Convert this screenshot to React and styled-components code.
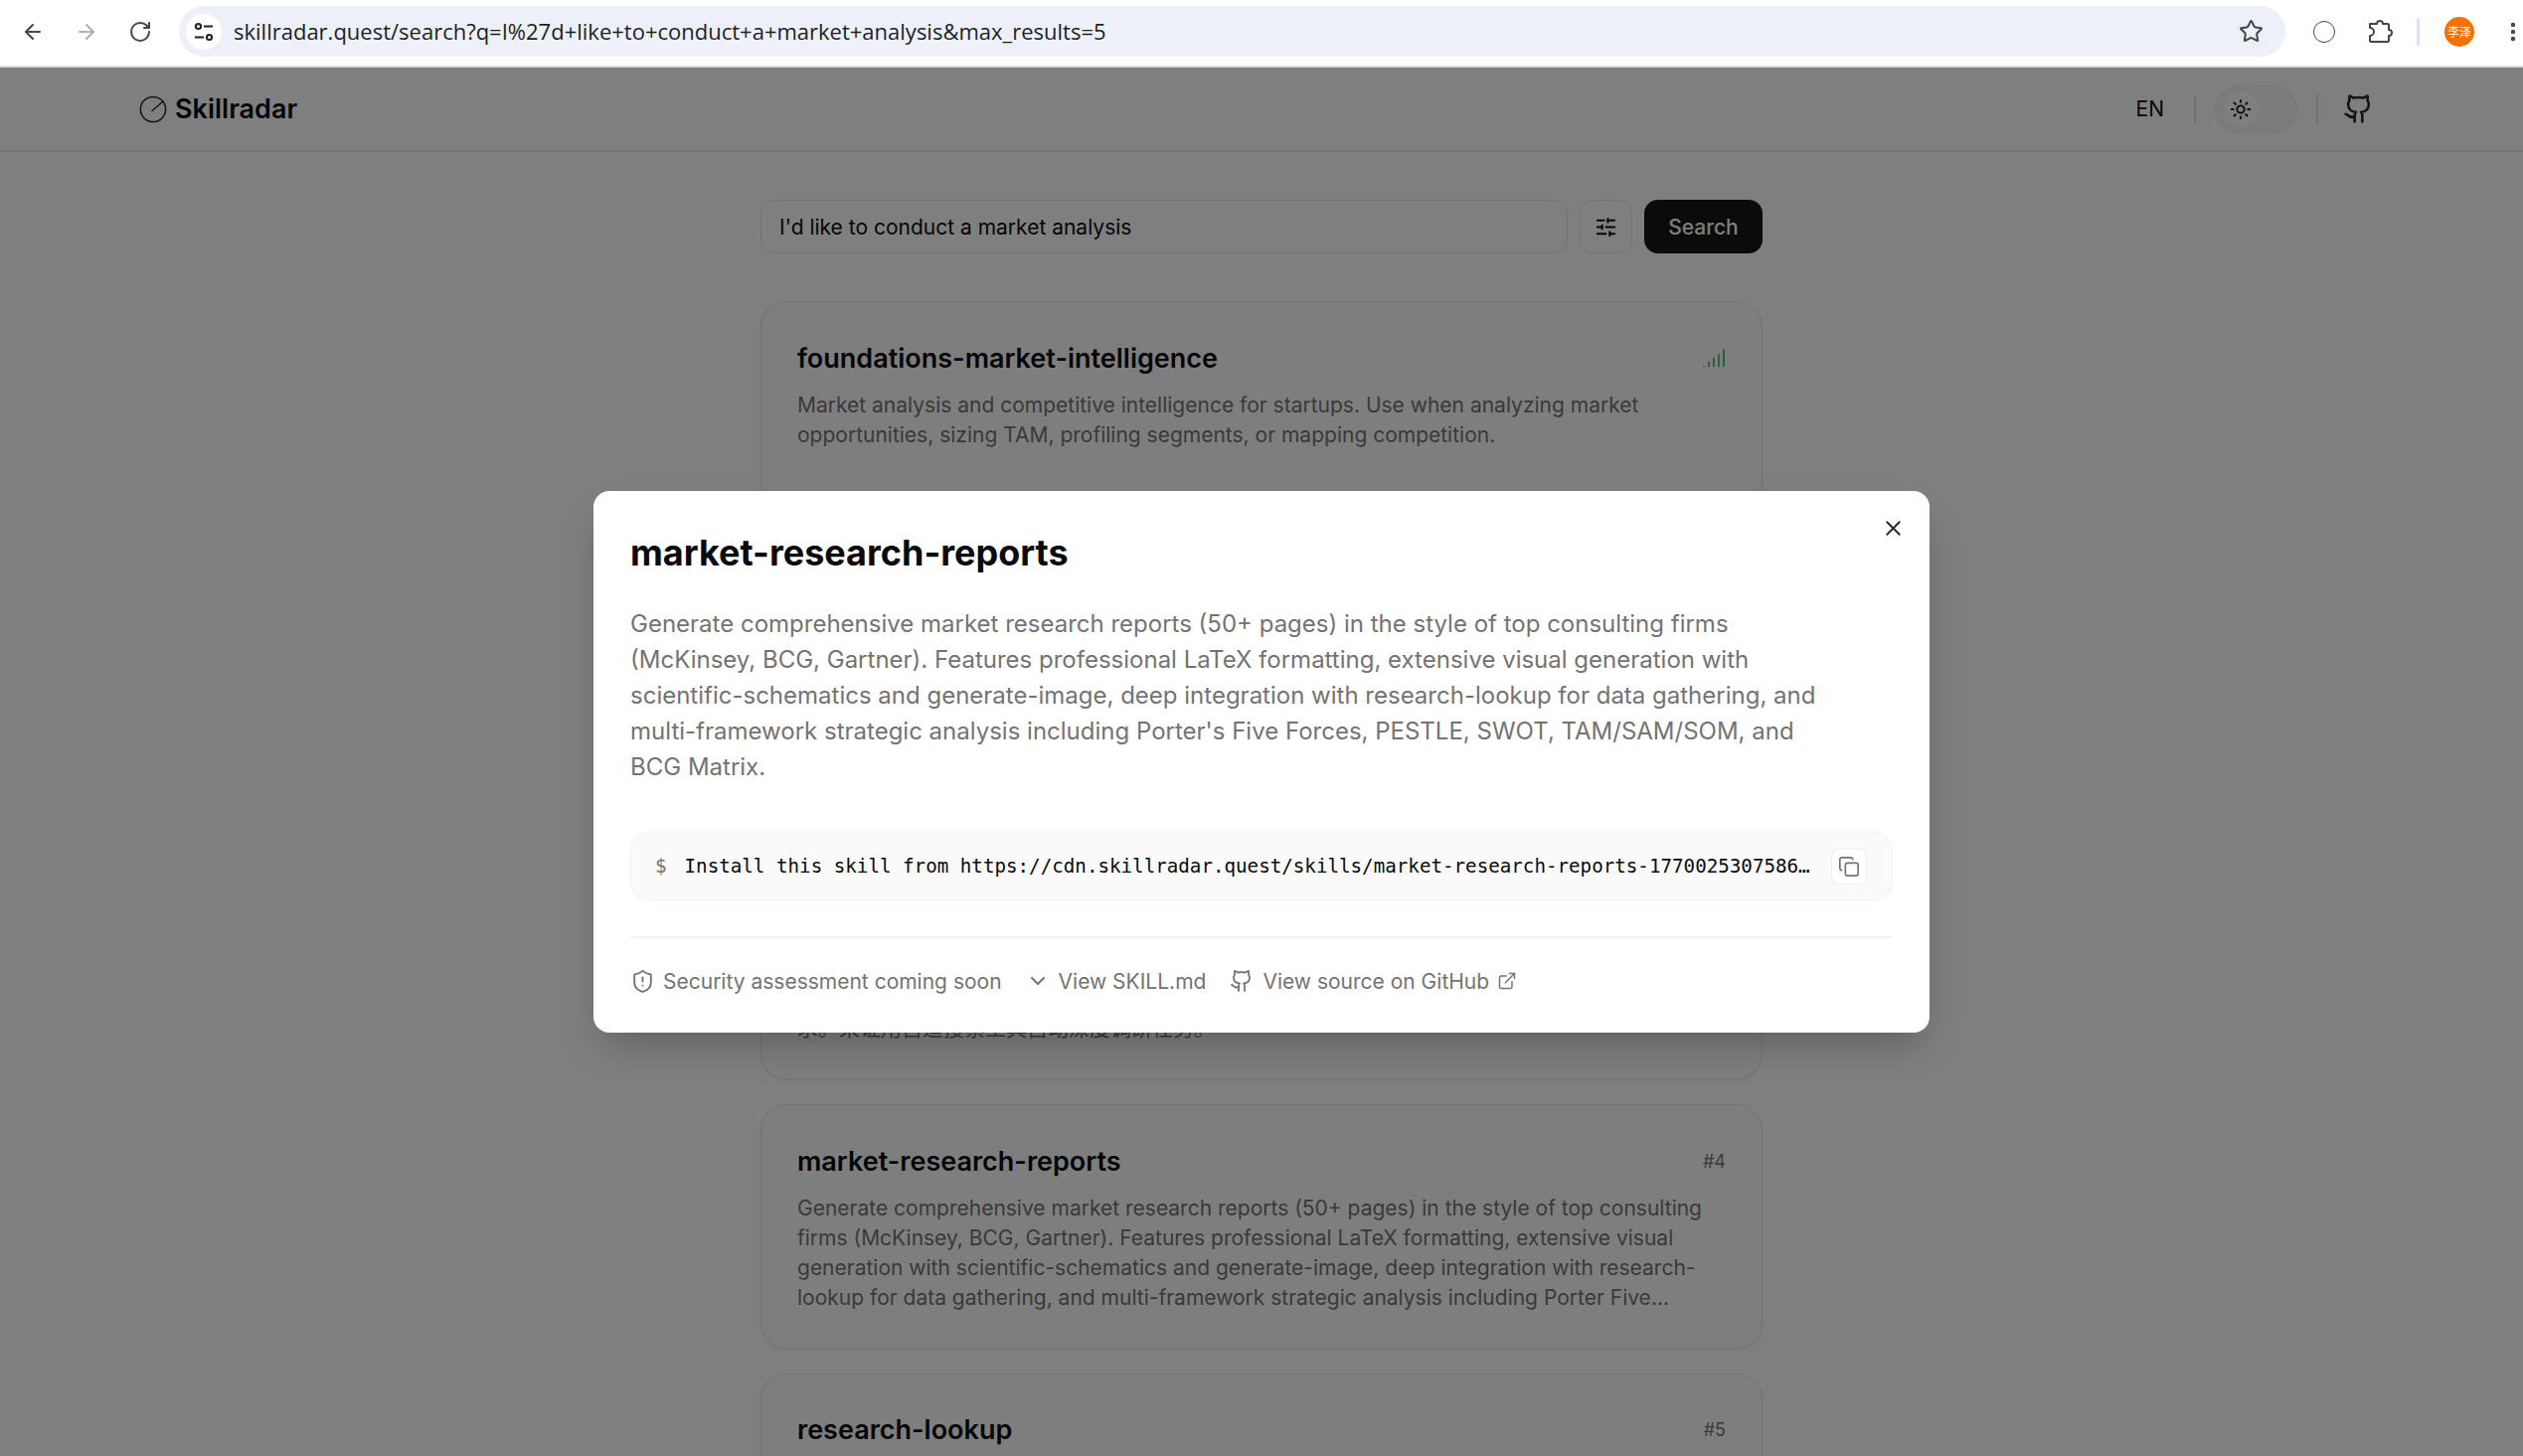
import styled, { createGlobalStyle } from 'styled-components';
import {
  ArrowLeft, ArrowRight, RotateCw, Star, MoreVertical, SlidersHorizontal,
  Sun, Github, X, Copy, ShieldAlert, ChevronDown, ExternalLink,
} from 'lucide-react';

const GlobalStyle = createGlobalStyle`
  html, body { margin: 0; padding: 0; background: #fff; }
  * { box-sizing: border-box; }
  body { font-family: Inter, "Noto Sans", sans-serif; color: #0a0a0a; }
`;

const Shell = styled.div`
  height: 100vh;
  display: flex;
  flex-direction: column;
  overflow: hidden;
`;

/* browser chrome */
const BrowserBar = styled.div`
  flex: none;
  height: 68px;
  display: flex;
  align-items: flex-start;
  padding-top: 6px;
  background: #fff;
  border-bottom: 2px solid #dcdcdc;
`;

const NavGroup = styled.div`
  width: 180px;
  height: 51px;
  flex: none;
  display: flex;
  align-items: center;
  padding-left: 21px;
  gap: 30px;
`;

const NavIcon = styled.span`
  display: flex;
  color: ${(p) => (p.$dim ? '#b0b0b0' : '#474747')};
`;

const AddressBar = styled.div`
  width: 2119px;
  height: 51px;
  flex: none;
  display: flex;
  align-items: center;
  padding: 0 22px 0 7px;
  background: #ecf0f9;
  border-radius: 26px;
`;

const SiteBadge = styled.span`
  width: 36px;
  height: 36px;
  flex: none;
  display: flex;
  align-items: center;
  justify-content: center;
  background: #fff;
  border-radius: 50%;
  margin-right: 12px;
`;

const UrlText = styled.span`
  flex: 1;
  padding-bottom: 2px;
  font-family: "Open Sans", "Noto Sans", sans-serif;
  font-size: 22px;
  color: #1f1f1f;
  white-space: nowrap;
`;

const ToolGroup = styled.div`
  flex: 1;
  height: 51px;
  display: flex;
  align-items: center;
  padding-left: 28px;
  color: #474747;
`;

const ProfileRing = styled.span`
  width: 22px;
  height: 22px;
  border: 1.5px solid #474747;
  border-radius: 50%;
  margin-right: 32px;
`;

const ToolSep = styled.span`
  width: 3px;
  height: 28px;
  background: #d3e3fd;
  border-radius: 2px;
  margin: 0 25px 0 24px;
`;

const Avatar = styled.span`
  width: 30px;
  height: 30px;
  flex: none;
  display: flex;
  align-items: center;
  justify-content: center;
  background: #f57100;
  color: #fff;
  border-radius: 50%;
  font-family: "Noto Sans CJK SC", sans-serif;
  font-size: 12px;
  margin-right: 27px;
`;

/* page behind the dialog */
const Viewport = styled.div`
  flex: 1;
  position: relative;
  overflow: hidden;
  background: #fff;
`;

const Header = styled.header`
  height: 85px;
  display: flex;
  align-items: center;
  justify-content: space-between;
  padding: 0 150px 0 140px;
  border-bottom: 2px solid #ececec;
`;

const Brand = styled.div`
  display: flex;
  align-items: center;
  gap: 8px;
  font-size: 27px;
  font-weight: 600;
  color: #0a0a0a;
`;

const HeaderTools = styled.div`
  display: flex;
  align-items: center;
  color: #0a0a0a;
`;

const LangLabel = styled.span`
  font-size: 21px;
  margin-right: 30px;
`;

const HeaderSep = styled.span`
  width: 2px;
  height: 30px;
  background: #e4e4e4;
`;

const ThemeToggle = styled.div`
  width: 83px;
  height: 48px;
  margin: 0 19px;
  padding: 5px 7px;
  background: #f7f7f7;
  border: 1px solid #ececec;
  border-radius: 24px;
`;

const ToggleKnob = styled.span`
  width: 36px;
  height: 36px;
  display: flex;
  align-items: center;
  justify-content: center;
  background: #fff;
  border-radius: 50%;
`;

const RepoLink = styled.span`
  display: flex;
  margin-left: 25px;
  color: #262626;
`;

const Main = styled.main`
  width: 1008px;
  margin: 0 auto;
  padding-top: 48px;
`;

const SearchRow = styled.div`
  height: 54px;
  display: flex;
  gap: 12px;
`;

const SearchField = styled.div`
  flex: 1;
  display: flex;
  align-items: center;
  padding: 0 18px;
  border: 1.5px solid #e6e6e6;
  border-radius: 14px;
  font-size: 21px;
  color: #0a0a0a;
`;

const FilterButton = styled.span`
  width: 53px;
  flex: none;
  display: flex;
  align-items: center;
  justify-content: center;
  border: 1.5px solid #e6e6e6;
  border-radius: 14px;
  color: #0a0a0a;
`;

const SearchButton = styled.span`
  width: 119px;
  flex: none;
  display: flex;
  align-items: center;
  justify-content: center;
  background: #171717;
  color: #fafafa;
  border-radius: 14px;
  font-size: 21px;
  font-weight: 500;
`;

const ResultList = styled.div`
  margin-top: 48px;
  display: flex;
  flex-direction: column;
  gap: 25px;
`;

const Card = styled.article`
  height: ${(p) => (p.$height ? `${p.$height}px` : 'auto')};
  flex: none;
  display: flex;
  flex-direction: column;
  justify-content: ${(p) => (p.$bottom ? 'flex-end' : 'flex-start')};
  padding: 36px 36px 35px;
  background: #fdfdfd;
  border: 1.5px solid #e8e8e8;
  border-radius: 26px;
  box-shadow: 0 2px 3px rgba(0, 0, 0, 0.06);
`;

const CardHead = styled.div`
  height: 40.5px;
  display: flex;
  align-items: center;
  justify-content: space-between;
`;

const CardTitle = styled.h3`
  margin: 0;
  font-size: 27px;
  font-weight: 600;
  color: #0a0a0a;
`;

const Rank = styled.span`
  font-size: 18px;
  color: #737373;
`;

const CardText = styled.p`
  margin: 12px 0 0;
  font-size: 21px;
  line-height: 30px;
  color: #737373;
  font-family: Inter, "Noto Sans CJK SC", sans-serif;
`;

/* dialog */
const Overlay = styled.div`
  position: absolute;
  inset: 0;
  display: flex;
  align-items: center;
  justify-content: center;
  background: rgba(0, 0, 0, 0.5);
`;

const Dialog = styled.div`
  position: relative;
  width: 1344px;
  padding: 35px 37px 0;
  background: #fff;
  border-radius: 16px;
  box-shadow: 0 20px 40px -10px rgba(0, 0, 0, 0.25);
`;

const CloseIcon = styled.span`
  position: absolute;
  top: 25px;
  right: 24px;
  display: flex;
  color: #262626;
`;

const DialogTitle = styled.h2`
  margin: 0;
  font-size: 36px;
  line-height: 54px;
  font-weight: 700;
  color: #0a0a0a;
`;

const DialogText = styled.p`
  margin: 27px 0 0;
  max-width: 1200px;
  font-size: 24px;
  line-height: 36px;
  color: #737373;
`;

const CommandBox = styled.div`
  height: 69px;
  margin-top: 47px;
  display: flex;
  align-items: center;
  padding: 0 25px 0 24px;
  background: #fafafa;
  border: 1.5px solid #f2f2f2;
  border-radius: 18px;
  font-family: "DejaVu Sans Mono", monospace;
  font-size: 19.2px;
`;

const Prompt = styled.span`
  flex: none;
  color: #737373;
  margin-right: 18px;
`;

const Command = styled.span`
  flex: 1;
  min-width: 0;
  white-space: nowrap;
  color: #0a0a0a;
`;

const CopyButton = styled.span`
  width: 36px;
  height: 36px;
  flex: none;
  display: flex;
  align-items: center;
  justify-content: center;
  background: #fff;
  border: 1.5px solid #eeeeee;
  border-radius: 8px;
  color: #737373;
`;

const DialogFooter = styled.div`
  height: 97px;
  margin-top: 36px;
  padding-bottom: 9px;
  display: flex;
  align-items: center;
  gap: 24px;
  border-top: 2px solid #f2f2f2;
  font-size: 21px;
  color: #737373;
`;

const FooterItem = styled.span`
  display: flex;
  align-items: center;
  gap: ${(p) => p.$gap || 12}px;
`;

const LinkOut = styled.span`
  display: flex;
  margin-left: -1px;
`;

function LogoMark() {
  return (
    <svg width="28" height="28" viewBox="0 0 28 28" fill="none" stroke="#262626" strokeWidth="1.5" strokeLinecap="round">
      <circle cx="14" cy="14" r="12.6" />
      <path d="M13 15.5 L24 6" />
    </svg>
  );
}

function SiteTune() {
  return (
    <svg width="20" height="20" viewBox="0 0 20 20" fill="none" stroke="#1f1f1f" strokeWidth="2">
      <circle cx="4.5" cy="4.5" r="2.6" />
      <path d="M10 4.5h9M1 15.5h9" />
      <circle cx="15.5" cy="15.5" r="2.6" />
    </svg>
  );
}

function ExtensionPiece() {
  return (
    <svg width="26" height="26" viewBox="0 0 26 26" fill="none" stroke="#474747" strokeWidth="2" strokeLinejoin="round">
      <path d="M3 5h7a3 3 0 0 1 6 0h5a1 1 0 0 1 1 1v5a3 3 0 0 1 0 6v5a1 1 0 0 1-1 1H4a1 1 0 0 1-1-1v-5a4 4 0 0 0 0-8V6a1 1 0 0 1 0-1z" />
    </svg>
  );
}

function SignalBars() {
  return (
    <svg width="24" height="20" viewBox="0 0 24 20" fill="none" stroke="#22b85a" strokeWidth="1.6">
      <path d="M2 19v-1M7 19v-5M12 19v-9M17 19v-13M22 19v-18" />
    </svg>
  );
}

export default function App() {
  return (
    <Shell>
      <GlobalStyle />
      <BrowserBar>
        <NavGroup>
          <NavIcon><ArrowLeft size={24} strokeWidth={2} /></NavIcon>
          <NavIcon $dim><ArrowRight size={24} strokeWidth={2} /></NavIcon>
          <NavIcon><RotateCw size={24} strokeWidth={2} /></NavIcon>
        </NavGroup>
        <AddressBar>
          <SiteBadge><SiteTune /></SiteBadge>
          <UrlText>skillradar.quest/search?q=I%27d+like+to+conduct+a+market+analysis&amp;max_results=5</UrlText>
          <NavIcon><Star size={25} strokeWidth={2} /></NavIcon>
        </AddressBar>
        <ToolGroup>
          <ProfileRing />
          <ExtensionPiece />
          <ToolSep />
          <Avatar>李泽</Avatar>
          <MoreVertical size={24} strokeWidth={2.5} />
        </ToolGroup>
      </BrowserBar>

      <Viewport>
        <Header>
          <Brand><LogoMark />Skillradar</Brand>
          <HeaderTools>
            <LangLabel>EN</LangLabel>
            <HeaderSep />
            <ThemeToggle>
              <ToggleKnob><Sun size={22} strokeWidth={2} /></ToggleKnob>
            </ThemeToggle>
            <HeaderSep />
            <RepoLink><Github size={31} strokeWidth={2} /></RepoLink>
          </HeaderTools>
        </Header>

        <Main>
          <SearchRow>
            <SearchField>I'd like to conduct a market analysis</SearchField>
            <FilterButton><SlidersHorizontal size={23} strokeWidth={2} /></FilterButton>
            <SearchButton>Search</SearchButton>
          </SearchRow>

          <ResultList>
            <Card $height={280}>
              <CardHead>
                <CardTitle>foundations-market-intelligence</CardTitle>
                <SignalBars />
              </CardHead>
              <CardText>
                Market analysis and competitive intelligence for startups. Use when analyzing market
                opportunities, sizing TAM, profiling segments, or mapping competition.
              </CardText>
            </Card>
            <Card $height={200} />
            <Card $height={253} $bottom>
              <CardText>求。采证用自适搜索工具自动深度调研任务。</CardText>
            </Card>
            <Card>
              <CardHead>
                <CardTitle>market-research-reports</CardTitle>
                <Rank>#4</Rank>
              </CardHead>
              <CardText>
                Generate comprehensive market research reports (50+ pages) in the style of top consulting
                firms (McKinsey, BCG, Gartner). Features professional LaTeX formatting, extensive visual
                generation with scientific-schematics and generate-image, deep integration with research-lookup
                for data gathering, and multi-framework strategic analysis including Porter Five...
              </CardText>
            </Card>
            <Card $height={246}>
              <CardHead>
                <CardTitle>research-lookup</CardTitle>
                <Rank>#5</Rank>
              </CardHead>
            </Card>
          </ResultList>
        </Main>

        <Overlay>
          <Dialog>
            <CloseIcon><X size={25} strokeWidth={1.8} /></CloseIcon>
            <DialogTitle>market-research-reports</DialogTitle>
            <DialogText>
              Generate comprehensive market research reports (50+ pages) in the style of top consulting firms
              (McKinsey, BCG, Gartner). Features professional LaTeX formatting, extensive visual generation with
              scientific-schematics and generate-image, deep integration with research-lookup for data gathering, and
              multi-framework strategic analysis including Porter's Five Forces, PESTLE, SWOT, TAM/SAM/SOM, and
              BCG Matrix.
            </DialogText>
            <CommandBox>
              <Prompt>$</Prompt>
              <Command>Install this skill from https://cdn.skillradar.quest/skills/market-research-reports-1770025307586…</Command>
              <CopyButton><Copy size={22} strokeWidth={1.8} /></CopyButton>
            </CommandBox>
            <DialogFooter>
              <FooterItem $gap={8}><ShieldAlert size={25} strokeWidth={1.8} />Security assessment coming soon</FooterItem>
              <FooterItem $gap={9}><ChevronDown size={24} strokeWidth={2} />View SKILL.md</FooterItem>
              <FooterItem $gap={9}>
                <Github size={24} strokeWidth={1.8} />View source on GitHub
                <LinkOut><ExternalLink size={20} strokeWidth={1.8} /></LinkOut>
              </FooterItem>
            </DialogFooter>
          </Dialog>
        </Overlay>
      </Viewport>
    </Shell>
  );
}
